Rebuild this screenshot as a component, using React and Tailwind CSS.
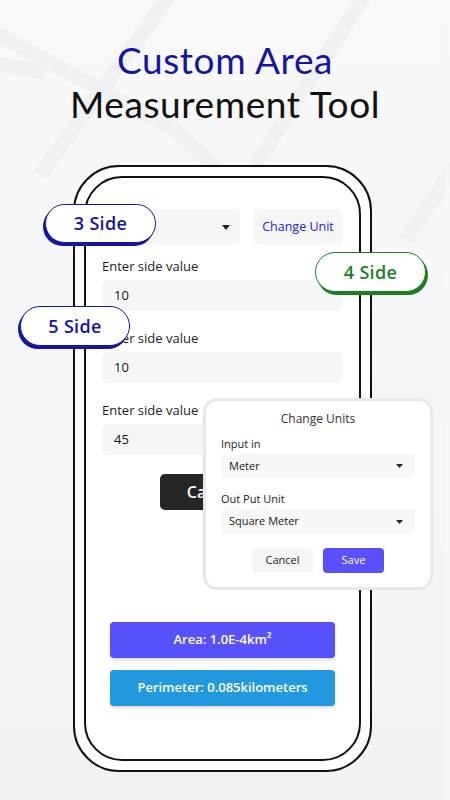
import { useState } from 'react';

const Caret = ({ w = 9, h = 5 }) => (
  <svg width={w} height={h} viewBox="0 0 9 5" preserveAspectRatio="none">
    <path d="M0 0h9L4.5 5z" fill="#222" />
  </svg>
);

function Badge({ label, tone, shadow, className }) {
  const colors =
    tone === 'green'
      ? 'border-[#1b7f22] text-[#1b7f22]'
      : 'border-[#1515a3] text-[#1515a3]';
  return (
    <div
      className={`absolute flex items-center justify-center rounded-full bg-white border-[1.5px] text-[18px] font-semibold tracking-[0.3px] ${colors} ${shadow} ${className}`}
    >
      {label}
    </div>
  );
}

function SideField({ value, first }) {
  return (
    <>
      <div className={`${first ? 'mt-[12px]' : 'mt-[18px]'} text-[13px] leading-[18px] text-[#222]`}>Enter side value</div>
      <div className="mt-[5px] h-[31px] rounded-md bg-[#f6f6f6] px-[12px] flex items-center text-[13px] text-[#111]">{value}</div>
    </>
  );
}

export default function App() {
  const [sides] = useState(['10', '10', '45']);

  return (
    <div className="relative w-[450px] h-[800px] overflow-hidden bg-gradient-to-b from-[#f9f9fa] via-[#f5f6f7] to-[#f2f3f5] font-['Open_Sans',sans-serif]">
      {/* faint street lines in the backdrop */}
      <svg className="absolute inset-0" width="450" height="800" viewBox="0 0 450 800">
        <g stroke="#f0f1f3" strokeWidth="15" fill="none">
          <path d="M-10 30 L175 130 L250 200" />
          <path d="M170 -5 L40 175" />
          <path d="M0 65 L45 72" />
          <path d="M365 -5 L255 165" />
          <path d="M460 160 L405 240" />
        </g>
        <path d="M447 0 L447 800" stroke="#f8f8f9" strokeWidth="4" />
      </svg>

      <div className="relative">
        <div className="pt-[38px] text-center font-['Lato',sans-serif] text-[37px] leading-[44px] tracking-[0.6px]">
          <div className="text-[#1414a6]">Custom Area</div>
          <div className="text-[#111]">Measurement Tool</div>
        </div>

        {/* phone frame */}
        <div className="mt-[39px] ml-[73px] w-[299px] h-[607px] rounded-[46px] border-2 border-[#111] bg-white p-[9px]">
          <div className="h-full rounded-[38px] border-2 border-[#111] px-[16px] pt-[31px]">
            <div className="flex gap-[13px]">
              <div className="flex-1 h-9 rounded-md bg-[#f6f6f6] flex items-center justify-end pr-[10px]">
                <Caret w={8} h={5} />
              </div>
              <div className="w-[90px] h-9 rounded-md bg-[#f6f6f6] flex items-center justify-center text-[12.5px] text-[#2424d6]">
                Change Unit
              </div>
            </div>

            {sides.map((v, i) => (
              <SideField key={i} value={v} first={i === 0} />
            ))}

            <div className="mx-auto mt-[19px] w-[125px] h-9 rounded-[5px] bg-[#262626] flex items-center justify-center text-white text-[16px] font-semibold">
              Calculate
            </div>

            <div className="mx-2 mt-[112px] h-9 rounded-[4px] bg-[#5751fb] shadow-[0_2px_3px_rgba(0,0,0,0.15)] flex items-center justify-center text-white text-[13px] font-semibold">
              Area: 1.0E-4km²
            </div>
            <div className="mx-2 mt-[12px] h-9 rounded-[4px] bg-[#2299de] shadow-[0_2px_3px_rgba(0,0,0,0.15)] flex items-center justify-center text-white text-[13px] font-semibold">
              Perimeter: 0.085kilometers
            </div>
          </div>
        </div>
      </div>

      <Badge label="3 Side" tone="blue" shadow="shadow-[-2px_3px_0_#1515a3]" className="left-[45px] top-[204px] w-[111px] h-[39px]" />
      <Badge label="4 Side" tone="green" shadow="shadow-[2px_3px_0_#1b7f22]" className="left-[315px] top-[252px] w-[111px] h-[40px]" />
      <Badge label="5 Side" tone="blue" shadow="shadow-[-2px_3px_0_#1515a3]" className="left-[20px] top-[306px] w-[110px] h-[40px]" />

      {/* change units dialog */}
      <div className="absolute left-[203px] top-[398px] w-[230px] h-[192px] rounded-[14px] border-[3px] border-[#e7e8ea] bg-white px-[15px] pt-[10px] text-[11px] text-[#222]">
        <div className="text-center text-[12px] leading-[16px] text-[#333]">Change Units</div>
        <div className="mt-[10px] leading-[14px]">Input in</div>
        <div className="mt-[3px] h-[24px] rounded-[4px] bg-[#f7f7f7] flex items-center justify-between pl-[8px] pr-[12px]">
          <span>Meter</span>
          <Caret w={7} h={4} />
        </div>
        <div className="mt-[14px] leading-[14px]">Out Put Unit</div>
        <div className="mt-[3px] h-[25px] rounded-[4px] bg-[#f7f7f7] flex items-center justify-between pl-[8px] pr-[12px]">
          <span>Square Meter</span>
          <Caret w={7} h={4} />
        </div>
        <div className="mt-[14px] flex justify-center gap-[10px]">
          <div className="w-[61px] h-[25px] rounded-[4px] bg-[#f5f5f5] flex items-center justify-center">Cancel</div>
          <div className="w-[61px] h-[25px] rounded-[4px] bg-[#5750fb] flex items-center justify-center text-white">Save</div>
        </div>
      </div>
    </div>
  );
}
